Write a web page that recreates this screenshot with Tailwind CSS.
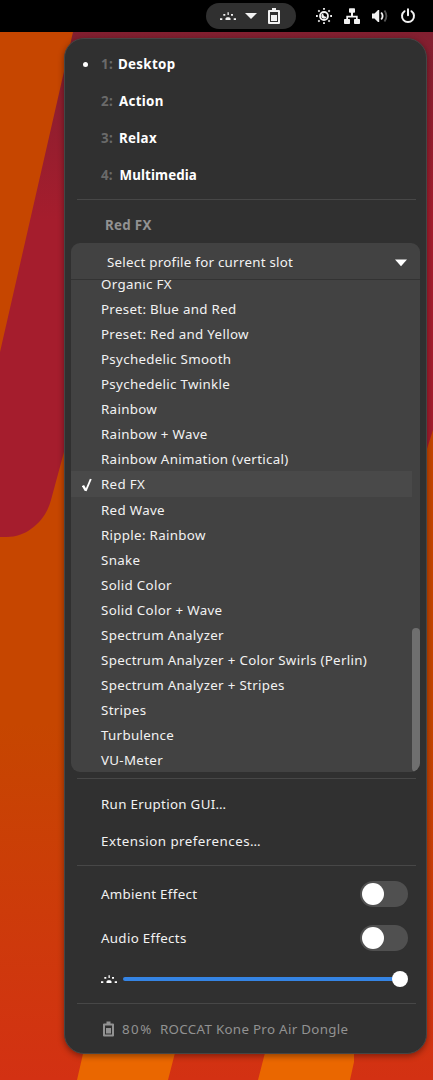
<!DOCTYPE html>
<html lang="en">
<head>
<meta charset="utf-8">
<title>Eruption profile menu</title>
<script src="https://cdn.jsdelivr.net/npm/@tailwindcss/browser@4"></script>
</head>
<body class="relative w-[433px] h-[1080px] overflow-hidden font-['Noto_Sans',sans-serif] text-[13.33px] tracking-[0.31px] text-[#f2f2f2]">
<svg class="absolute inset-0 -z-10" width="433" height="1080" viewBox="0 0 433 1080">
  <defs>
    <linearGradient id="o" x1="0" y1="0" x2="0" y2="1"><stop offset="0" stop-color="#c64600"/><stop offset=".67" stop-color="#c64600"/><stop offset="1" stop-color="#d33113"/></linearGradient>
    <linearGradient id="r" gradientUnits="userSpaceOnUse" x1="0" y1="32" x2="0" y2="220"><stop offset="0" stop-color="#821f30"/><stop offset="1" stop-color="#a51d2d"/></linearGradient>
  </defs>
  <rect width="433" height="1080" fill="url(#o)"/>
  <path d="M73 32H433V430L426 452H64L51 500C46 520 28 537 7 537H0V352Z" fill="url(#r)"/>
  <path d="M85 1045H177L168 1080H77ZM267 1045H354V1062L350 1080H258Z" fill="#ea6700"/>
</svg>
<div class="flex flex-col h-full">
  <header class="h-8 shrink-0 bg-black flex items-center text-[#f2f2f2]">
    <div class="ml-[206px] w-[90px] h-[26px] rounded-full bg-[#303030] flex items-center pl-[14px]">
      <svg width="16" height="16" viewBox="0 0 16 16" fill="currentColor"><path d="M5.500 12V10.300L6.800 9.300H9.200L10.500 10.300V12ZM7.500 4.300H8.800V7H7.500ZM3.300 6h2v1.800h-2ZM11 6h2v1.800h-2ZM0 10.200h2.300V12H0ZM13.700 10.200H16V12h-2.300Z"/></svg>
      <svg class="ml-[9px]" width="12" height="16" viewBox="0 0 12 16" fill="currentColor"><path d="M0 5h12L6 11Z"/></svg>
      <svg class="ml-[9px]" width="16" height="16" viewBox="0 0 16 16" fill="currentColor"><path fill-rule="evenodd" d="M6 0h4v2H13q1 0 1 1v12q0 1-1 1H3q-1 0-1-1V3q0-1 1-1h3ZM4 4v10h8V4ZM5 7h6v6H5Z"/></svg>
    </div>
    <div class="ml-5 flex gap-3">
      <svg width="16" height="16" viewBox="0 0 16 16" fill="none" stroke="currentColor"><circle cx="8" cy="8" r="4" stroke-width="1.800"/><path fill="currentColor" stroke="none" d="M7.500 5.200a2.800 2.800 0 1 0 3.300 3.300A2.500 2.500 0 0 1 7.500 5.200Z"/><path stroke-width="1.800" d="M8 0v1.800M8 14.200V16M0 8h1.800M14.200 8H16M2.300 2.300l1.300 1.300M12.400 12.400l1.300 1.300M2.300 13.700l1.300-1.300M12.400 3.600l1.300-1.300"/></svg>
      <svg width="16" height="16" viewBox="0 0 16 16" fill="currentColor"><path d="M5.800 0.300h4.400q.8 0 .8.800v2.800q0 .8-.8.800H9V7.700h4.700V11H15.200q.8 0 .8.800v3.400q0 .8-.8.800h-4.400q-.8 0-.8-.8v-3.400q0-.8.800-.8H12V9.400H4V11h1.200q.8 0 .8.800v3.400q0 .8-.8.800H.8q-.8 0-.8-.8v-3.400Q0 11 .8 11H2.300V7.700H7V4.700H5.800Q5 4.700 5 3.900V1.100q0-.8.800-.8Z"/></svg>
      <svg width="16" height="16" viewBox="0 0 16 16" fill="none" stroke="currentColor"><path fill="currentColor" stroke="none" d="M0 5.500h2.500L6 2h1.200v12H6l-3.500-3.500H0Z"/><path stroke-width="1.800" d="M9.200 4.500q2.800 3.500 0 7"/><path opacity=".35" stroke-width="1.800" d="M12.500 2.500q3.800 5.500 0 11"/></svg>
      <svg width="16" height="16" viewBox="0 0 16 16" fill="none" stroke="currentColor" stroke-width="2"><path d="M4.500 3.200a6 6 0 1 0 7 0M8 1.200v6" stroke-linecap="round"/></svg>
    </div>
  </header>
  <main class="ml-16 mt-[6px] w-[363px] h-[1016px] shrink-0 rounded-[20px] border border-[#454545] bg-[#303030] shadow-[0_2px_6px_rgba(0,0,0,0.4)] flex flex-col pt-[7px] px-[6px]">
    <div class="h-[37px] pl-[30px] flex items-center font-bold text-white relative"><i class="absolute left-[12px] top-[16px] size-[5px] rounded-full bg-white"></i><span class="text-[#6a6a6a] mr-[5px]">1:</span>Desktop</div>
    <div class="h-[37px] pl-[30px] flex items-center font-bold text-white"><span class="text-[#6a6a6a] mr-[6px]">2:</span>Action</div>
    <div class="h-[37px] pl-[30px] flex items-center font-bold text-white"><span class="text-[#6a6a6a] mr-[6px]">3:</span>Relax</div>
    <div class="h-[37px] pl-[30px] flex items-center font-bold text-white tracking-[0.1px]"><span class="text-[#6a6a6a] mr-[7px]">4:</span>Multimedia</div>
    <div class="mt-[5px] ml-[6px] w-[339px] h-px shrink-0 bg-[#474747]"></div>
    <div class="h-[43px] pt-[8px] pl-[34px] flex items-center font-bold text-[#929292]">Red FX</div>
    <section class="w-[349px] h-[529px] shrink-0 rounded-[9px] bg-[#424242] overflow-hidden flex flex-col">
      <div class="h-[37px] shrink-0 pt-[3px] pl-9 pr-3 flex items-center justify-between border-b border-[#333] tracking-[0.26px]"><span>Select profile for current slot</span><svg width="14" height="8" viewBox="0 0 14 8" fill="white"><path d="M1 .5h12L7 7.200Z"/></svg></div>
      <div class="flex-1 overflow-hidden relative">
        <div class="-mt-[9px] flex flex-col [&>p]:h-[25px] [&>p]:shrink-0 [&>p]:pl-[30px] [&>p]:leading-[27px] [&>p]:whitespace-nowrap">
          <p>Organic FX</p><p>Preset: Blue and Red</p><p>Preset: Red and Yellow</p><p>Psychedelic Smooth</p><p>Psychedelic Twinkle</p><p>Rainbow</p><p>Rainbow + Wave</p><p>Rainbow Animation (vertical)</p>
          <div class="h-[26px] pt-px shrink-0 w-[341px] bg-[#494949] flex items-center pl-[11px]"><svg class="mr-[9px]" width="10" height="14" viewBox="0 0 10 14" fill="none" stroke="white"><path stroke-width="2.400" d="M1 7.500L3.800 12.500"/><path stroke-width="1.900" d="M3.700 13L8.800 1"/></svg>Red FX</div>
          <p>Red Wave</p><p>Ripple: Rainbow</p><p>Snake</p><p>Solid Color</p><p>Solid Color + Wave</p><p>Spectrum Analyzer</p><p>Spectrum Analyzer + Color Swirls (Perlin)</p><p>Spectrum Analyzer + Stripes</p><p>Stripes</p><p>Turbulence</p><p>VU-Meter</p>
        </div>
        <i class="absolute right-0 bottom-0 w-2 h-[144px] rounded-full bg-[#6f6f6f]"></i>
      </div>
    </section>
    <div class="mt-[6px] ml-[6px] w-[339px] h-px shrink-0 bg-[#474747]"></div>
    <div class="mt-[7px] h-[37px] pl-[30px] flex items-center">Run Eruption GUI…</div>
    <div class="h-[37px] pl-[30px] flex items-center tracking-[0.48px]">Extension preferences…</div>
    <div class="mt-[5px] ml-[6px] w-[339px] h-px shrink-0 bg-[#474747]"></div>
    <div class="mt-[6px] h-[44px] pl-[30px] pr-[12px] flex items-center justify-between"><span class="pt-[2px]">Ambient Effect</span><span class="w-12 h-[26px] rounded-full bg-[#505050] p-[2px]"><i class="block size-[22px] rounded-full bg-white"></i></span></div>
    <div class="h-[44px] pl-[30px] pr-[12px] flex items-center justify-between"><span class="pt-[2px]">Audio Effects</span><span class="w-12 h-[26px] rounded-full bg-[#505050] p-[2px]"><i class="block size-[22px] rounded-full bg-white"></i></span></div>
    <div class="h-[37px] pl-[30px] pr-[12px] flex items-center">
      <svg width="16" height="16" viewBox="0 0 16 16" fill="white"><path d="M5.500 12V10.300L6.800 9.300H9.200L10.500 10.300V12ZM7.500 4.300H8.800V7H7.500ZM3.300 6h2v1.800h-2ZM11 6h2v1.800h-2ZM0 10.200h2.300V12H0ZM13.700 10.200H16V12h-2.300Z"/></svg>
      <span class="ml-[6px] h-1 flex-1 rounded-l-full bg-[#3584e4]"></span><i class="-ml-px size-4 rounded-full bg-white"></i>
    </div>
    <div class="mt-[6px] ml-[6px] w-[339px] h-px shrink-0 bg-[#474747]"></div>
    <div class="mt-[7px] h-[37px] pl-[30px] flex items-center text-[#929292]"><svg class="mr-[5px] mb-[2px]" width="16" height="16" viewBox="0 0 16 16" fill="currentColor"><path fill-rule="evenodd" d="M5.500 .5h4v2h2.500q1 0 1 1v11q0 1-1 1H3q-1 0-1-1v-11q0-1 1-1h2.500ZM4 4.500v9h7v-9ZM5 7h5v5.500h-5Z"/></svg><span class="w-[38px] shrink-0 tracking-[1.500px]">80%</span><span>ROCCAT Kone Pro Air Dongle</span></div>
  </main>
</div>
</body>
</html>
